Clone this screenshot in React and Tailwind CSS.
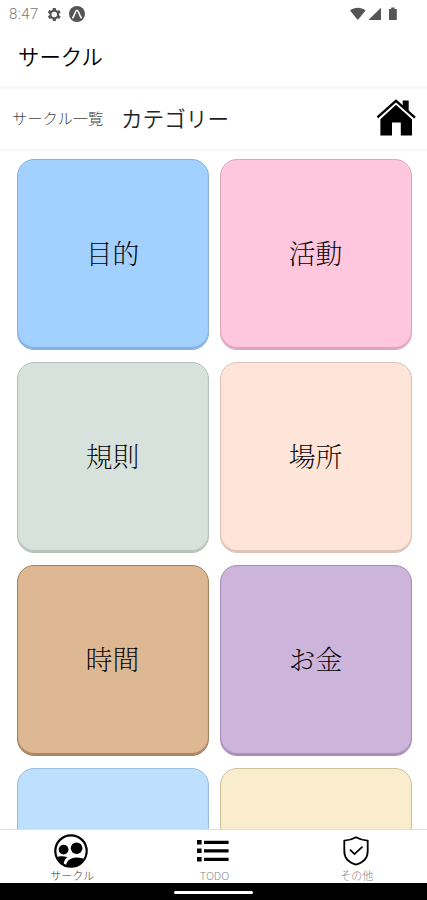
import React, { useState } from 'react';

const categories = [
  { id: 'purpose', label: '目的', color: 'bg-[#a2d1ff] border-[#8bb3da] shadow-[inset_0_-2px_1px_#86afdb]' },
  { id: 'activity', label: '活動', color: 'bg-[#ffc7de] border-[#dba9bd] shadow-[inset_0_-2px_1px_#dba5bc]' },
  { id: 'rule', label: '規則', color: 'bg-[#d8e2dc] border-[#b7c1bb] shadow-[inset_0_-2px_1px_#b8c2bc]' },
  { id: 'place', label: '場所', color: 'bg-[#ffe5d9] border-[#dac2b7] shadow-[inset_0_-2px_1px_#dcc3b8]' },
  { id: 'time', label: '時間', color: 'bg-[#deb893] border-[#a4825f] shadow-[inset_0_-2px_1px_#a78461]' },
  { id: 'money', label: 'お金', color: 'bg-[#cdb4db] border-[#a78fb5] shadow-[inset_0_-2px_1px_#a88fb7]' },
  { id: 'member', label: '', color: 'bg-[#bde0fe] border-[#9dbdd8] shadow-[inset_0_-2px_1px_#9dbdd8]' },
  { id: 'other', label: '', color: 'bg-[#faedcd] border-[#d0c19d] shadow-[inset_0_-2px_1px_#d0c19d]' }
];

const HomeIcon = () => (
  <svg className="w-10 h-[38px]" viewBox="0 0 40 38" fill="none">
    <path d="M20 5.8 36 20.2v16.2H24.8V23.6h-8.8v12.8H4.4V20.2z" fill="#000" />
    <path d="M1 18.8 20 1.8l19.2 17" stroke="#fff" strokeWidth="5.4" />
    <path d="M26.7 1.6h6v11l-6-5.4z" fill="#000" />
    <path d="M1.4 18.4 20 1.8l19 16.8" stroke="#000" strokeWidth="2.4" />
  </svg>
);

const CircleIcon = () => (
  <svg className="w-[34px] h-[34px]" viewBox="0 0 34 34">
    <defs>
      <clipPath id="people">
        <circle cx="17" cy="17" r="15.8" />
      </clipPath>
    </defs>
    <circle cx="17" cy="17" r="15.7" fill="#fff" stroke="#000" strokeWidth="2.2" />
    <g clipPath="url(#people)">
      <circle cx="9.6" cy="15.6" r="4.9" />
      <circle cx="22.6" cy="14.2" r="5.8" />
      <path d="M0 24.5C4 21.8 9 21.8 13.4 23.2c-2.7 1.8-3.8 4.6-3.9 8.6L5 33z" />
      <path d="M11.7 34c0-6.6 4.2-10.5 10.5-10.5 4.5 0 8 1.3 11.8 3.2V34z" />
    </g>
  </svg>
);

const ListIcon = () => (
  <svg className="w-8 h-[22px]" viewBox="0 0 32 22">
    <path d="M0 0h4.6v4.4H0zM0 8.6h4.6V13H0zM0 17h4.6v4.4H0zM7 .8h24.6V4H7zM7 9.2h24.6v3.2H7zM7 17.7h24.6v3.2H7z" />
  </svg>
);

const ShieldIcon = () => (
  <svg className="w-[26px] h-[30px]" viewBox="0 0 26 30" fill="none" stroke="#000" strokeWidth="1.8">
    <path d="M13 1.3c3.7 2.2 7.5 3.1 11.7 3.4v10.6c0 6.7-4.7 11.4-11.7 13.4C6 26.7 1.3 22 1.3 15.3V4.7C5.5 4.4 9.3 3.5 13 1.3z" strokeLinejoin="round" />
    <path d="m7 13.7 4.5 4.4 8-7.5" />
  </svg>
);

const tabs = [
  { id: 'circle', label: 'サークル', icon: CircleIcon },
  { id: 'todo', label: 'TODO', icon: ListIcon },
  { id: 'others', label: 'その他', icon: ShieldIcon }
];

function StatusBar() {
  return (
    <div className="h-7 shrink-0 flex items-center justify-between pl-[9px] pr-[29px] text-[#777]">
      <div className="flex items-center">
        <span className="w-[37px] text-[15px] font-light tracking-[0.4px] font-['Roboto',sans-serif]">8:47</span>
        <svg className="w-[15px] h-[15px]" viewBox="2 2 20 20" fill="#555">
          <path fillRule="evenodd" d="M19.4 13a7.8 7.8 0 0 0 0-2l2.1-1.6-2-3.5-2.5 1a7.3 7.3 0 0 0-1.7-1L15 3.2h-4l-.4 2.7a7.3 7.3 0 0 0-1.7 1l-2.5-1-2 3.5L6.6 11a7.8 7.8 0 0 0 0 2l-2.1 1.6 2 3.5 2.5-1a7.3 7.3 0 0 0 1.7 1l.3 2.7h4l.4-2.7a7.3 7.3 0 0 0 1.7-1l2.5 1 2-3.5zM13 8.3a3.7 3.7 0 1 1 0 7.4 3.7 3.7 0 0 1 0-7.4z" />
        </svg>
        <svg className="w-4 h-4 ml-2" viewBox="0 0 16 16">
          <circle cx="8" cy="8" r="8" fill="#555" />
          <path d="M3.8 11.6C5.6 9.6 6.4 4.2 8 4.2s2.4 5.4 4.2 7.4" fill="none" stroke="#fff" strokeWidth="1.6" strokeLinecap="round" />
        </svg>
      </div>
      <svg className="w-12 h-[14px]" viewBox="0 0 48 14" fill="#555">
        <path d="M0 3.6C4.6-.1 11-.1 15.6 3.6L7.8 13z" />
        <path d="M31 .8V13H18.4z" />
        <path d="M39 2h2.2V.6h3.4V2h2.2v11H39z" />
      </svg>
    </div>
  );
}

export default function App() {
  const [activeTab, setActiveTab] = useState('circle');

  return (
    <div className="w-full h-screen flex flex-col overflow-hidden bg-white text-black font-['Noto_Sans_CJK_JP',sans-serif]">
      <StatusBar />

      {/* Title */}
      <header className="h-[58px] shrink-0 flex items-center pl-[18px] pb-0.5">
        <h1 className="text-[21.4px] leading-none font-[350]">サークル</h1>
      </header>

      {/* Category header */}
      <div className="h-[65px] shrink-0 flex items-center pl-3 pr-[11px] pb-0.5 border-y-[3px] border-[#f9f9f9]">
        <button className="w-[109px] text-left text-[15.3px] leading-none font-light text-[#444] whitespace-nowrap">サークル一覧</button>
        <h2 className="flex-1 text-[21.6px] leading-none font-[350] text-[#222]">カテゴリー</h2>
        <button>
          <HomeIcon />
        </button>
      </div>

      {/* Category cards */}
      <main className="flex-1 min-h-0 overflow-hidden px-[17px] pt-2 pr-[15px]">
        <div className="grid grid-cols-[192px_192px] gap-x-[11px] gap-y-3">
          {categories.map((category) => (
            <button
              key={category.id}
              className={`h-[191px] flex items-center justify-center rounded-[17px] border pr-px pb-0.5 text-[26.8px] leading-none font-extralight font-['Noto_Serif_CJK_JP','Noto_Sans_CJK_JP',serif] ${category.color}`}
            >
              {category.label}
            </button>
          ))}
        </div>
      </main>

      {/* Bottom tabs */}
      <nav className="h-[54px] shrink-0 grid grid-cols-3 border-t border-[#ddd]">
        {tabs.map((tab) => {
          const Icon = tab.icon;

          return (
            <button
              key={tab.id}
              onClick={() => setActiveTab(tab.id)}
              className={`flex flex-col items-center pt-[3px] ${
                activeTab === tab.id ? 'text-[#333]' : 'text-[#888]'
              }`}
            >
              <span className="h-[35px] flex items-center justify-center">
                <Icon />
              </span>
              <span className="pl-0.5 text-[11px] leading-[14px] font-light">{tab.label}</span>
            </button>
          );
        })}
      </nav>

      {/* Gesture bar */}
      <div className="h-[17px] shrink-0 flex items-center justify-center pt-0.5 bg-black">
        <div className="w-[79px] h-[3px] rounded-full bg-white" />
      </div>
    </div>
  );
}
